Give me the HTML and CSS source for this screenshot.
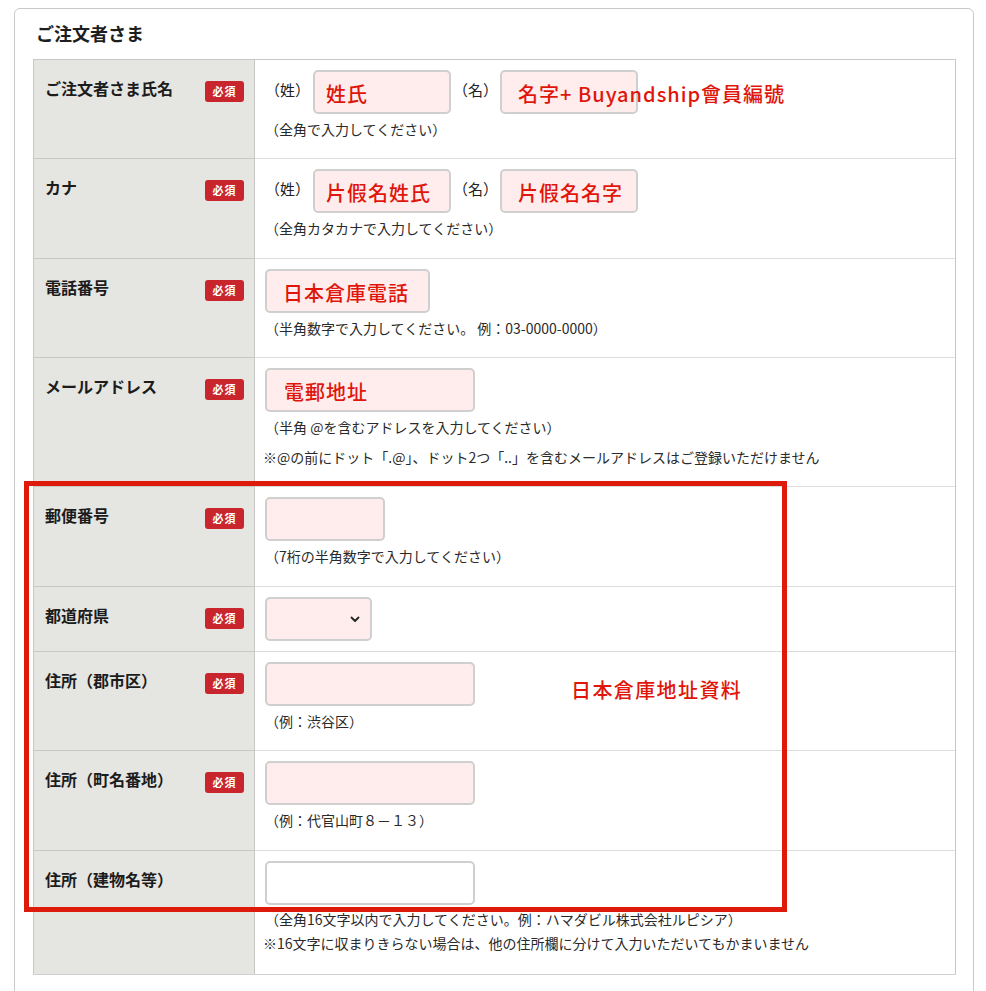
FILE: index.html
```html
<!DOCTYPE html>
<html lang="ja">
<head>
<meta charset="utf-8">
<title>ご注文者さま</title>
<link rel="stylesheet" href="styles.css">
</head>
<body>
<div class="page">
  <section class="card">
    <h2 class="card-title">ご注文者さま</h2>
    <div class="form-table">
      <div class="row">
        <div class="label"><span class="label-text">ご注文者さま氏名</span><span class="badge">必須</span></div>
        <div class="field">
          <div class="inline">
            <span class="paren">（姓）</span>
            <div class="input w138 pl13"><span class="val">姓氏</span></div>
            <span class="paren paren-2">（名）</span>
            <div class="input w138 pl18"><span class="val">名字+ Buyandship會員編號</span></div>
          </div>
          <p class="hint">（全角で入力してください）</p>
        </div>
      </div>
      <div class="row">
        <div class="label"><span class="label-text">カナ</span><span class="badge">必須</span></div>
        <div class="field pb20">
          <div class="inline">
            <span class="paren">（姓）</span>
            <div class="input w138 pl13"><span class="val">片假名姓氏</span></div>
            <span class="paren paren-2">（名）</span>
            <div class="input w138 pl18"><span class="val">片假名名字</span></div>
          </div>
          <p class="hint">（全角カタカナで入力してください）</p>
        </div>
      </div>
      <div class="row">
        <div class="label"><span class="label-text">電話番号</span><span class="badge">必須</span></div>
        <div class="field">
          <div class="input w165 pl18"><span class="val">日本倉庫電話</span></div>
          <p class="hint">（半角数字で入力してください。 例：03-0000-0000）</p>
        </div>
      </div>
      <div class="row">
        <div class="label"><span class="label-text">メールアドレス</span><span class="badge">必須</span></div>
        <div class="field">
          <div class="input w210 pl19"><span class="val">電郵地址</span></div>
          <p class="hint">（半角 @を含むアドレスを入力してください）</p>
          <p class="note note-wide">※@の前にドット「.@」、ドット2つ「..」を含むメールアドレスはご登録いただけません</p>
        </div>
      </div>
      <div class="row">
        <div class="label"><span class="label-text">郵便番号</span><span class="badge">必須</span></div>
        <div class="field pb20">
          <div class="input w120"></div>
          <p class="hint">（7桁の半角数字で入力してください）</p>
        </div>
      </div>
      <div class="row row-short">
        <div class="label"><span class="label-text">都道府県</span><span class="badge">必須</span></div>
        <div class="field field-short">
          <div class="input select w107">
            <svg class="chev" width="10" height="7" viewBox="0 0 10 7"><path d="M1.5 1.5 L5 5 L8.5 1.5" fill="none" stroke="#222" stroke-width="1.8" stroke-linecap="round" stroke-linejoin="round"/></svg>
          </div>
        </div>
      </div>
      <div class="row">
        <div class="label"><span class="label-text">住所（郡市区）</span><span class="badge">必須</span></div>
        <div class="field">
          <div class="input w210"></div>
          <p class="hint">（例：渋谷区）</p>
        </div>
      </div>
      <div class="row">
        <div class="label"><span class="label-text">住所（町名番地）</span><span class="badge">必須</span></div>
        <div class="field pb20">
          <div class="input w210"></div>
          <p class="hint">（例：代官山町８－１３）</p>
        </div>
      </div>
      <div class="row row-last">
        <div class="label"><span class="label-text">住所（建物名等）</span></div>
        <div class="field pb21">
          <div class="input input-white w210"></div>
          <p class="hint hint-tight">（全角16文字以内で入力してください。例：ハマダビル株式会社ルピシア）</p>
          <p class="note">※16文字に収まりきらない場合は、他の住所欄に分けて入力いただいてもかまいません</p>
        </div>
      </div>
    </div>
  </section>
  <div class="annot-box"></div>
  <div class="annot-text">日本倉庫地址資料</div>
</div>
</body>
</html>
```

FILE: styles.css
```css
html, body {
  margin: 0;
  padding: 0;
  background: #ffffff;
}
body {
  font-family: "Noto Sans CJK JP", "Noto Sans", sans-serif;
  color: #222222;
}
.page {
  position: relative;
  width: 986px;
  height: 991px;
  overflow: hidden;
}
.card {
  margin: 8px 0 0 14px;
  width: 960px;
  height: 1000px;
  box-sizing: border-box;
  border: 1px solid #c9c9c9;
  border-radius: 6px;
  padding: 0 17px 0 18px;
}
.card-title {
  margin: 11px 0 13px 3px;
  font-size: 18px;
  line-height: 26px;
  font-weight: 700;
  color: #1e1e1e;
}
.form-table {
  border: 1px solid #c8c8c8;
  border-bottom-color: #d0d0d0;
}
.row {
  display: flex;
  border-bottom: 1px solid #dcdcdc;
}
.row-last {
  border-bottom: none;
}
.label {
  box-sizing: border-box;
  flex: 0 0 221px;
  width: 221px;
  background: #e5e5e1;
  border-right: 1px solid #c6c6c6;
  border-bottom: 1px solid #c8c8c8;
  margin-bottom: -1px;
  display: flex;
  justify-content: space-between;
  align-items: flex-start;
  padding: 17px 10px 0 11px;
}
.row-last .label {
  border-bottom: none;
  margin-bottom: 0;
}
.label-text {
  font-size: 16px;
  line-height: 22px;
  font-weight: 700;
  color: #1c1c1c;
}
.badge {
  margin-top: 4px;
  width: 39px;
  height: 21px;
  border-radius: 3px;
  background: #c9252c;
  color: #ffffff;
  font-size: 11px;
  font-weight: 700;
  line-height: 21px;
  text-align: center;
  letter-spacing: 1px;
}
.field {
  flex: 1;
  padding: 10px 10px 19px 10px;
}
.field.pb20 {
  padding-bottom: 20px;
}
.field.pb21 {
  padding-bottom: 21px;
}
.field-short {
  padding-bottom: 10px;
}
.inline {
  display: flex;
  align-items: center;
}
.paren {
  font-size: 15px;
  line-height: 20px;
  margin-right: 3px;
  margin-top: -4px;
  color: #222;
}
.paren-2 {
  margin-left: 2px;
  margin-right: 2px;
}
.input {
  box-sizing: border-box;
  height: 44px;
  border: 2px solid #cfcfcf;
  border-radius: 5px;
  background: #ffeded;
  display: flex;
  align-items: center;
  padding-top: 4px;
  white-space: nowrap;
  overflow: visible;
}
.input-white {
  background: #ffffff;
}
.val {
  color: #e0160b;
  font-size: 20px;
  font-weight: 500;
  letter-spacing: 1px;
  line-height: 24px;
}
.w107 { width: 107px; }
.w120 { width: 120px; }
.w138 { width: 138px; }
.w165 { width: 165px; }
.w210 { width: 210px; }
.pl13 { padding-left: 11px; }
.pl18 { padding-left: 16px; }
.pl19 { padding-left: 17px; }
.select {
  justify-content: flex-end;
  padding: 0 10px 0 0;
}
.chev {
  display: block;
}
.hint {
  margin: 5px 0 0 0;
  font-size: 14px;
  line-height: 20px;
  color: #2a2a2a;
}
.hint-tight {
  margin-top: 4px;
}
.note {
  margin: 4px 0 0 -2px;
  font-size: 14px;
  line-height: 20px;
  color: #2a2a2a;
}
.note-wide {
  margin-top: 10px;
}
.annot-box {
  position: absolute;
  left: 24px;
  top: 481px;
  width: 763px;
  height: 431px;
  box-sizing: border-box;
  border: 5px solid #de1a0a;
  pointer-events: none;
}
.annot-text {
  position: absolute;
  left: 571px;
  top: 676px;
  font-size: 20px;
  line-height: 28px;
  font-weight: 500;
  letter-spacing: 1.4px;
  color: #e0160b;
}
```
